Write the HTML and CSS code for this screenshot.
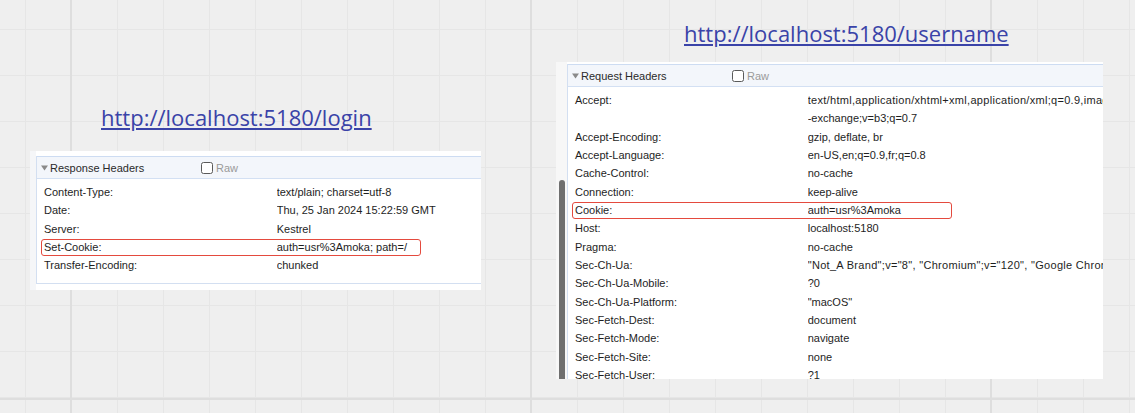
FILE: index.html
```html
<!DOCTYPE html>
<html>
<head>
<meta charset="utf-8">
<link rel="stylesheet" href="styles.css">
</head>
<body>
<div class="col col-left">
  <a class="url url-left" href="#">http://localhost:5180/login</a>
  <div class="panel panel-left">
    <div class="strip"></div>
    <div class="section">
      <div class="hdr">
        <div class="title"><svg class="tri" width="7" height="6" viewBox="0 0 7 6"><path d="M0 0.5 H7 L3.5 5.5 Z" fill="#8a8a8a"/></svg><span>Response Headers</span></div>
        <span class="cb"></span><span class="raw">Raw</span>
      </div>
      <div class="rows">
        <div class="row"><span class="k">Content-Type:</span><span class="v">text/plain; charset=utf-8</span></div>
        <div class="row"><span class="k">Date:</span><span class="v">Thu, 25 Jan 2024 15:22:59 GMT</span></div>
        <div class="row"><span class="k">Server:</span><span class="v">Kestrel</span></div>
        <div class="row"><span class="hl"></span><span class="k">Set-Cookie:</span><span class="v">auth=usr%3Amoka; path=/</span></div>
        <div class="row"><span class="k">Transfer-Encoding:</span><span class="v">chunked</span></div>
      </div>
    </div>
  </div>
</div>
<div class="col col-right">
  <a class="url url-right" href="#">http://localhost:5180/username</a>
  <div class="panel panel-right">
    <div class="strip strip-wide"><div class="thumb"></div></div>
    <div class="section">
      <div class="hdr">
        <div class="title"><svg class="tri" width="7" height="6" viewBox="0 0 7 6"><path d="M0 0.5 H7 L3.5 5.5 Z" fill="#8a8a8a"/></svg><span>Request Headers</span></div>
        <span class="cb"></span><span class="raw">Raw</span>
      </div>
      <div class="rows">
        <div class="row"><span class="k">Accept:</span><span class="v wide">text/html,application/xhtml+xml,application/xml;q=0.9,image/avif,image/webp,image/apng,*/*;q=0.8,application/signed</span></div>
        <div class="row"><span class="k"></span><span class="v">-exchange;v=b3;q=0.7</span></div>
        <div class="row"><span class="k">Accept-Encoding:</span><span class="v">gzip, deflate, br</span></div>
        <div class="row"><span class="k">Accept-Language:</span><span class="v">en-US,en;q=0.9,fr;q=0.8</span></div>
        <div class="row"><span class="k">Cache-Control:</span><span class="v">no-cache</span></div>
        <div class="row"><span class="k">Connection:</span><span class="v">keep-alive</span></div>
        <div class="row"><span class="hl"></span><span class="k">Cookie:</span><span class="v">auth=usr%3Amoka</span></div>
        <div class="row"><span class="k">Host:</span><span class="v">localhost:5180</span></div>
        <div class="row"><span class="k">Pragma:</span><span class="v">no-cache</span></div>
        <div class="row"><span class="k">Sec-Ch-Ua:</span><span class="v wide">"Not_A Brand";v="8", "Chromium";v="120", "Google Chrome";v="120"</span></div>
        <div class="row"><span class="k">Sec-Ch-Ua-Mobile:</span><span class="v">?0</span></div>
        <div class="row"><span class="k">Sec-Ch-Ua-Platform:</span><span class="v">"macOS"</span></div>
        <div class="row"><span class="k">Sec-Fetch-Dest:</span><span class="v">document</span></div>
        <div class="row"><span class="k">Sec-Fetch-Mode:</span><span class="v">navigate</span></div>
        <div class="row"><span class="k">Sec-Fetch-Site:</span><span class="v">none</span></div>
        <div class="row"><span class="k">Sec-Fetch-User:</span><span class="v">?1</span></div>
        <div class="row"><span class="k">Upgrade-Insecure-Requests:</span><span class="v">1</span></div>
      </div>
    </div>
  </div>
</div>
</body>
</html>
```
FILE: styles.css
```css
html, body {
  margin: 0;
  padding: 0;
}
body {
  width: 1135px;
  height: 413px;
  overflow: hidden;
  display: flex;
  align-items: flex-start;
  font-family: "Liberation Sans", Arial, sans-serif;
  background-color: #efefef;
  background-image:
    linear-gradient(to right, #dedede 2px, transparent 2px),
    linear-gradient(to bottom, #dedede 2px, transparent 2px),
    linear-gradient(to right, #e6e6e6 1px, transparent 1px),
    linear-gradient(to bottom, #e6e6e6 1px, transparent 1px);
  background-size: 460px 460px, 460px 460px, 46px 46px, 46px 46px;
  background-position: 70px 0, 0 398px, 25px 0, 0 29px;
}
.col {
  display: flex;
  flex-direction: column;
}
.col-left {
  margin-left: 30px;
  width: 451px;
  padding-top: 101.5px;
}
.col-right {
  margin-left: 75px;
  width: 547px;
  padding-top: 18px;
}
.url {
  font-family: "Open Sans", sans-serif;
  font-size: 22px;
  line-height: 30px;
  color: #3a43a8;
  text-decoration: underline;
  text-decoration-thickness: 1.5px;
  text-underline-offset: 2px;
  align-self: flex-start;
}
.url-left {
  margin-left: 71px;
  margin-bottom: 19.5px;
}
.url-right {
  margin-left: 128px;
  margin-bottom: 14px;
}
.panel {
  background: #ffffff;
  display: flex;
  overflow: hidden;
}
.panel-left {
  height: 139px;
  padding-top: 5px;
  box-sizing: border-box;
}
.panel-right {
  height: 317px;
  padding-top: 2px;
  box-sizing: border-box;
}
.strip {
  width: 6px;
  flex: none;
  background: #f5f6f8;
  margin-top: -5px;
}
.strip-wide {
  width: 11px;
  margin-top: -2px;
  padding-top: 118px;
  padding-left: 3px;
  box-sizing: border-box;
  background: #f7f7f7;
}
.thumb {
  width: 6px;
  height: 220px;
  border-radius: 3px;
  background: #6f6f6f;
}
.section {
  flex: 1;
  min-width: 0;
  border-left: 1px solid #d3dff1;
  align-self: flex-start;
}
.panel-left .section {
  border-bottom: 1px solid #d3dff1;
}
.hdr {
  height: 21px;
  border-top: 1px solid #cddcf2;
  border-bottom: 1px solid #d3e0f3;
  background: #f3f6fb;
  display: flex;
  align-items: center;
  font-size: 11px;
  color: #2a2a2a;
}
.title {
  width: 164px;
  flex: none;
  display: flex;
  align-items: center;
  padding-left: 4px;
  box-sizing: border-box;
}
.tri {
  margin-right: 2px;
  flex: none;
}
.cb {
  width: 10px;
  height: 10px;
  border: 1px solid #5a5a5a;
  border-radius: 2.5px;
  background: #fff;
  flex: none;
}
.raw {
  color: #9a9a9a;
  margin-left: 3px;
}
.rows {
  padding-top: 4px;
}
.panel-left .rows {
  padding-bottom: 8.6px;
}
.row {
  position: relative;
  height: 18.33px;
  display: flex;
  align-items: center;
  font-size: 11px;
  color: #1e1e1e;
}
.k {
  width: 239.7px;
  padding-left: 7px;
  box-sizing: border-box;
  flex: none;
  white-space: nowrap;
}
.v {
  flex: 1;
  min-width: 0;
  white-space: nowrap;
  overflow: hidden;
}
.wide {
  letter-spacing: 0.3px;
}
.hl {
  position: absolute;
  left: 3.5px;
  top: 0.6px;
  width: 380px;
  height: 17px;
  box-sizing: border-box;
  border: 1.5px solid #e44a3e;
  border-radius: 3px;
}
```
